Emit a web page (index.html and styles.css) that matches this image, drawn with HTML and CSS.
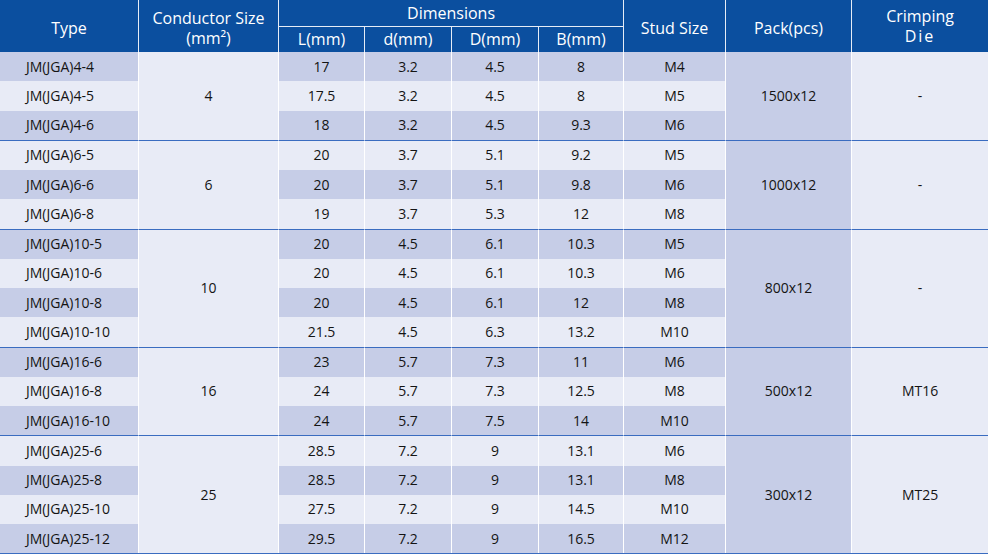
FILE: index.html
```html
<!DOCTYPE html>
<html lang="en">
<head>
<meta charset="utf-8">
<title>JM(JGA) Terminals</title>
<link rel="stylesheet" href="styles.css">
</head>
<body>
<table class="spec">
  <colgroup>
    <col class="c-type"><col class="c-cond"><col class="c-l"><col class="c-d"><col class="c-dd"><col class="c-b"><col class="c-stud"><col class="c-pack"><col class="c-die">
  </colgroup>
  <thead>
    <tr class="h1">
      <th rowspan="2" class="hs">Type</th>
      <th rowspan="2" class="hs two low"><span class="ln">Conductor Size</span><span class="ln">(mm²)</span></th>
      <th colspan="4" class="dim">Dimensions</th>
      <th rowspan="2" class="hs">Stud Size</th>
      <th rowspan="2" class="hs">Pack(pcs)</th>
      <th rowspan="2" class="hs two last"><span class="ln">Crimping</span><span class="ln die">Die</span></th>
    </tr>
    <tr class="h2">
      <th>L(mm)</th><th>d(mm)</th><th>D(mm)</th><th>B(mm)</th>
    </tr>
  </thead>
  <tbody>
    <tr><td class="type">JM(JGA)4-4</td><td rowspan="3" class="cond">4</td><td>17</td><td>3.2</td><td>4.5</td><td>8</td><td>M4</td><td rowspan="3" class="pack">1500x12</td><td rowspan="3" class="die-c">-</td></tr>
    <tr><td class="type">JM(JGA)4-5</td><td>17.5</td><td>3.2</td><td>4.5</td><td>8</td><td>M5</td></tr>
    <tr><td class="type">JM(JGA)4-6</td><td>18</td><td>3.2</td><td>4.5</td><td>9.3</td><td>M6</td></tr>

    <tr class="grp"><td class="type">JM(JGA)6-5</td><td rowspan="3" class="cond">6</td><td>20</td><td>3.7</td><td>5.1</td><td>9.2</td><td>M5</td><td rowspan="3" class="pack">1000x12</td><td rowspan="3" class="die-c">-</td></tr>
    <tr><td class="type">JM(JGA)6-6</td><td>20</td><td>3.7</td><td>5.1</td><td>9.8</td><td>M6</td></tr>
    <tr><td class="type">JM(JGA)6-8</td><td>19</td><td>3.7</td><td>5.3</td><td>12</td><td>M8</td></tr>

    <tr class="grp"><td class="type">JM(JGA)10-5</td><td rowspan="4" class="cond">10</td><td>20</td><td>4.5</td><td>6.1</td><td>10.3</td><td>M5</td><td rowspan="4" class="pack">800x12</td><td rowspan="4" class="die-c">-</td></tr>
    <tr><td class="type">JM(JGA)10-6</td><td>20</td><td>4.5</td><td>6.1</td><td>10.3</td><td>M6</td></tr>
    <tr><td class="type">JM(JGA)10-8</td><td>20</td><td>4.5</td><td>6.1</td><td>12</td><td>M8</td></tr>
    <tr><td class="type">JM(JGA)10-10</td><td>21.5</td><td>4.5</td><td>6.3</td><td>13.2</td><td>M10</td></tr>

    <tr class="grp"><td class="type">JM(JGA)16-6</td><td rowspan="3" class="cond">16</td><td>23</td><td>5.7</td><td>7.3</td><td>11</td><td>M6</td><td rowspan="3" class="pack">500x12</td><td rowspan="3" class="die-c">MT16</td></tr>
    <tr><td class="type">JM(JGA)16-8</td><td>24</td><td>5.7</td><td>7.3</td><td>12.5</td><td>M8</td></tr>
    <tr><td class="type">JM(JGA)16-10</td><td>24</td><td>5.7</td><td>7.5</td><td>14</td><td>M10</td></tr>

    <tr class="grp"><td class="type">JM(JGA)25-6</td><td rowspan="4" class="cond">25</td><td>28.5</td><td>7.2</td><td>9</td><td>13.1</td><td>M6</td><td rowspan="4" class="pack">300x12</td><td rowspan="4" class="die-c">MT25</td></tr>
    <tr><td class="type">JM(JGA)25-8</td><td>28.5</td><td>7.2</td><td>9</td><td>13.1</td><td>M8</td></tr>
    <tr><td class="type">JM(JGA)25-10</td><td>27.5</td><td>7.2</td><td>9</td><td>14.5</td><td>M10</td></tr>
    <tr><td class="type">JM(JGA)25-12</td><td>29.5</td><td>7.2</td><td>9</td><td>16.5</td><td>M12</td></tr>
  </tbody>
</table>
</body>
</html>
```

FILE: styles.css
```css
html, body {
  margin: 0;
  padding: 0;
  background: #ffffff;
}

.spec {
  width: 988px;
  table-layout: fixed;
  border-collapse: separate;
  border-spacing: 0;
  font-family: "Open Sans", "Noto Sans", sans-serif;
  color: #141414;
  border-bottom: 1px solid #3a6cc0;
}

.c-type { width: 139px; }
.c-cond { width: 140px; }
.c-l { width: 86px; }
.c-d { width: 87px; }
.c-dd { width: 87px; }
.c-b { width: 85px; }
.c-stud { width: 102px; }
.c-pack { width: 126px; }
.c-die { width: 136px; }

th {
  background: #0b4f9f;
  color: #ffffff;
  font-weight: 400;
  font-size: 16px;
  line-height: 19px;
  padding: 0;
  text-align: center;
  vertical-align: middle;
  border-right: 1px solid #e6ecf6;
}

th.last { border-right: none; }

.h1 th { height: 26px; }
.h2 th { height: 25px; }

th.hs { padding-top: 4px; }
th.two { padding-top: 0; }
th.low { padding-top: 4px; }

th .ln {
  display: block;
  height: 20px;
  line-height: 20px;
  overflow: hidden;
}

th.dim {
  border-bottom: 1px solid #e6ecf6;
}

.die { letter-spacing: 2px; }

td {
  font-size: 14px;
  height: 29.25px;
  padding: 0;
  text-align: center;
  vertical-align: middle;
  border-right: 1px solid #ffffff;
  background: #e8ebf6;
  line-height: 18px;
}

tbody tr:nth-child(odd) td { background: #c6cde7; }

td.type {
  text-align: left;
  padding-left: 26px;
}

tbody tr td.cond,
tbody tr td.die-c { background: #e8ebf6; }

tbody tr td.pack { background: #c6cde7; }

td.die-c { border-right: none; }

tr.grp td { border-top: 1px solid #3a6cc0; }
```
